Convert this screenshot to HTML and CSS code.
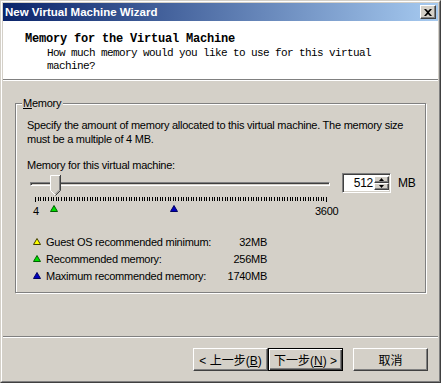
FILE: index.html
```html
<!DOCTYPE html>
<html>
<head>
<meta charset="utf-8">
<link rel="stylesheet" href="styles.css">
</head>
<body>
<div class="window">
  <div class="frame">
    <div class="titlebar">
      <span class="title">New Virtual Machine Wizard</span>
      <span class="close">
        <svg width="8" height="7" viewBox="0 0 8 7"><path d="M0 0h2l2 2 2-2h2L5 3.5 8 7H6L4 5 2 7H0l3-3.5z" fill="#000"/></svg>
      </span>
    </div>
    <div class="header">
      <div class="h-title">Memory for the Virtual Machine</div>
      <div class="h-sub">How much memory would you like to use for this virtual<br>machine?</div>
    </div>
    <div class="main">
      <div class="content">
        <div class="group">
          <span class="legend"><u>M</u>emory</span>
          <p class="desc">Specify the amount of memory allocated to this virtual machine. The memory size<br>must be a multiple of 4 MB.</p>
          <p class="label">Memory for this virtual machine:</p>
          <div class="slider-row">
            <div class="slider">
              <div class="track"></div>
              <svg class="ticks" width="300" height="6" viewBox="0 0 300 6" shape-rendering="crispEdges" id="ticks"></svg>
              <svg class="thumb" width="11" height="21" viewBox="0 0 11 21">
                <path d="M0 0H10V15L5 20L0 15Z" fill="#d4d0c8"/>
                <path d="M0.5 15.5V0.5H10" fill="none" stroke="#fff"/>
                <path d="M0.5 15.5L5 20" fill="none" stroke="#fff"/>
                <path d="M10.5 0V15.5L5.5 20.5" fill="none" stroke="#404040"/>
                <path d="M9.5 1V15L5.5 19" fill="none" stroke="#808080"/>
              </svg>
              <span class="tick-label min">4</span>
              <span class="tick-label max">3600</span>
              <svg class="marker m-green" width="8" height="7" viewBox="0 0 8 7"><path d="M4 0.5L7.5 6.5H0.5Z" fill="#00e000" stroke="#006000"/></svg>
              <svg class="marker m-blue" width="8" height="7" viewBox="0 0 8 7"><path d="M4 0.5L7.5 6.5H0.5Z" fill="#0000c0" stroke="#000060"/></svg>
            </div>
            <div class="spin">
              <span class="spin-value">512</span>
              <span class="spin-btns">
                <span class="spin-btn"><svg width="5" height="3" viewBox="0 0 5 3"><path d="M2.5 0L5 3H0Z" fill="#000"/></svg></span>
                <span class="spin-btn"><svg width="5" height="3" viewBox="0 0 5 3"><path d="M0 0H5L2.5 3Z" fill="#000"/></svg></span>
              </span>
            </div>
            <span class="unit">MB</span>
          </div>
          <div class="legend-list">
            <svg class="tri" width="8" height="7" viewBox="0 0 8 7"><path d="M4 0.5L7.5 6.5H0.5Z" fill="#ffff00" stroke="#404000"/></svg>
            <span>Guest OS recommended minimum:</span>
            <span class="val">32MB</span>
            <svg class="tri" width="8" height="7" viewBox="0 0 8 7"><path d="M4 0.5L7.5 6.5H0.5Z" fill="#00e000" stroke="#006000"/></svg>
            <span>Recommended memory:</span>
            <span class="val">256MB</span>
            <svg class="tri" width="8" height="7" viewBox="0 0 8 7"><path d="M4 0.5L7.5 6.5H0.5Z" fill="#0000c0" stroke="#000060"/></svg>
            <span>Maximum recommended memory:</span>
            <span class="val">1740MB</span>
          </div>
        </div>
      </div>
      <div class="sep"></div>
      <div class="buttons">
        <button class="btn">&lt; 上一步(<u>B</u>)</button>
        <button class="btn default">下一步(<u>N</u>) &gt;</button>
        <button class="btn cancel">取消</button>
      </div>
    </div>
  </div>
</div>
<script>
  var s = document.getElementById('ticks');
  var html = '';
  var n = 112;
  for (var i = 0; i <= n; i++) {
    var x = 5 + Math.round(i * 291 / n);
    var h = (i === 0 || i === n) ? 5 : 4;
    html += '<rect x="' + x + '" y="0" width="1" height="' + h + '" fill="#000"/>';
  }
  s.innerHTML = html;
</script>
</body>
</html>
```
FILE: styles.css
```css
html, body {
  margin: 0;
  padding: 0;
  background: #d4d0c8;
}
body {
  width: 441px;
  height: 383px;
  overflow: hidden;
  font-family: "Liberation Sans", Arial, sans-serif;
  font-size: 11px;
  letter-spacing: -0.25px;
  color: #000;
}
.window {
  box-sizing: border-box;
  width: 441px;
  height: 383px;
  border: 1px solid;
  border-color: #d4d0c8 #404040 #404040 #d4d0c8;
}
.frame {
  box-sizing: border-box;
  height: 100%;
  border: 1px solid;
  border-color: #fff #808080 #808080 #fff;
  padding: 1px;
  display: flex;
  flex-direction: column;
  background: #d4d0c8;
}
.titlebar {
  height: 18px;
  flex: none;
  background: linear-gradient(to right, #0a246a, #a6caf0);
  display: flex;
  align-items: flex-start;
  justify-content: space-between;
}
.title {
  color: #fff;
  font-weight: bold;
  font-size: 11.5px;
  letter-spacing: 0;
  line-height: 18px;
  padding-left: 2px;
}
.close {
  box-sizing: border-box;
  width: 16px;
  height: 14px;
  margin: 2px 2px 0 0;
  background: #d4d0c8;
  border: 1px solid;
  border-color: #fff #404040 #404040 #fff;
  box-shadow: inset -1px -1px #808080;
  display: flex;
  align-items: center;
  justify-content: center;
}
.close svg { display: block; margin-left: -1px; }
.header {
  flex: none;
  height: 59px;
  box-sizing: border-box;
  background: #fff;
  padding: 11px 0 0 22px;
  border-bottom: 1px solid #808080;
  box-shadow: 0 1px #fff;
  margin-bottom: 1px;
  font-family: "Liberation Mono", "DejaVu Sans Mono", monospace;
}
.h-title {
  font-weight: bold;
  font-size: 12px;
  letter-spacing: -0.2px;
  line-height: 14px;
}
.h-sub {
  font-size: 11px;
  letter-spacing: -0.6px;
  line-height: 13px;
  padding-left: 22px;
  margin-top: 1px;
}
.main {
  flex: 1;
  display: flex;
  flex-direction: column;
}
.content {
  padding: 22px 0 0 12px;
}
.group {
  position: relative;
  box-sizing: border-box;
  width: 411px;
  height: 190px;
  border: 1px solid #808080;
  box-shadow: inset 1px 1px #fff, 1px 1px #fff;
  padding: 14px 0 0 11px;
}
.legend {
  position: absolute;
  left: 6px;
  top: -8px;
  padding: 0 2px 0 1px;
  background: #d4d0c8;
  line-height: 14px;
}
.desc, .label {
  margin: 0;
  line-height: 14px;
  white-space: nowrap;
}
.label { margin-top: 12px; }
.slider-row {
  display: flex;
  align-items: flex-start;
  margin-top: 1px;
}
.slider {
  position: relative;
  width: 306px;
  height: 45px;
  flex: none;
}
.track {
  position: absolute;
  left: 3px;
  top: 9px;
  width: 300px;
  height: 4px;
  box-sizing: border-box;
  border: 1px solid;
  border-color: #808080 #fff #fff #808080;
  box-shadow: inset 1px 1px #404040;
}
.ticks {
  position: absolute;
  left: 3px;
  top: 24px;
}
.thumb {
  position: absolute;
  left: 23px;
  top: 2px;
}
.tick-label {
  position: absolute;
  top: 31px;
  line-height: 14px;
}
.tick-label.min { left: 6px; }
.tick-label.max { left: 288px; }
.marker { position: absolute; }
.m-green { left: 23px; top: 32px; }
.m-blue { left: 143px; top: 32px; }
.spin {
  box-sizing: border-box;
  width: 49px;
  height: 20px;
  margin-left: 9px;
  background: #fff;
  border: 1px solid;
  border-color: #808080 #fff #fff #808080;
  box-shadow: inset 1px 1px #404040, inset -1px -1px #d4d0c8;
  display: flex;
  padding: 2px 1px 2px 2px;
}
.spin-value {
  flex: 1;
  text-align: right;
  font-size: 12px;
  line-height: 14px;
  padding-right: 1px;
}
.spin-btns {
  width: 15px;
  display: flex;
  flex-direction: column;
}
.spin-btn {
  flex: 1;
  box-sizing: border-box;
  background: #d4d0c8;
  border: 1px solid;
  border-color: #fff #404040 #404040 #fff;
  box-shadow: inset -1px -1px #808080;
  display: flex;
  align-items: center;
  justify-content: center;
}
.spin-btn svg { display: block; }
.unit {
  margin-left: 7px;
  line-height: 20px;
  font-size: 12px;
}
.legend-list {
  display: grid;
  width: 234px;
  grid-template-columns: 13px 1fr auto;
  grid-auto-rows: 17px;
  align-items: center;
  margin: 15px 0 0 6px;
  white-space: nowrap;
}
.tri { display: block; }
.val { text-align: right; }
.sep {
  margin-top: 43px;
  border-top: 1px solid #808080;
  border-bottom: 1px solid #fff;
}
.buttons {
  display: flex;
  justify-content: flex-end;
  padding: 10px 10px 0 0;
}
.btn {
  box-sizing: border-box;
  width: 75px;
  height: 23px;
  margin: 0;
  padding: 0;
  background: #d4d0c8;
  border: 1px solid;
  border-color: #fff #404040 #404040 #fff;
  box-shadow: inset -1px -1px #808080;
  font-family: "Liberation Sans", "Noto Sans CJK SC", sans-serif;
  font-size: 12px;
  letter-spacing: 0;
  color: #000;
}
.btn.default {
  border: 1px solid #000;
  box-shadow: inset 1px 1px #fff, inset -1px -1px #404040, inset -2px -2px #808080;
}
.btn.cancel { margin-left: 10px; }
```
